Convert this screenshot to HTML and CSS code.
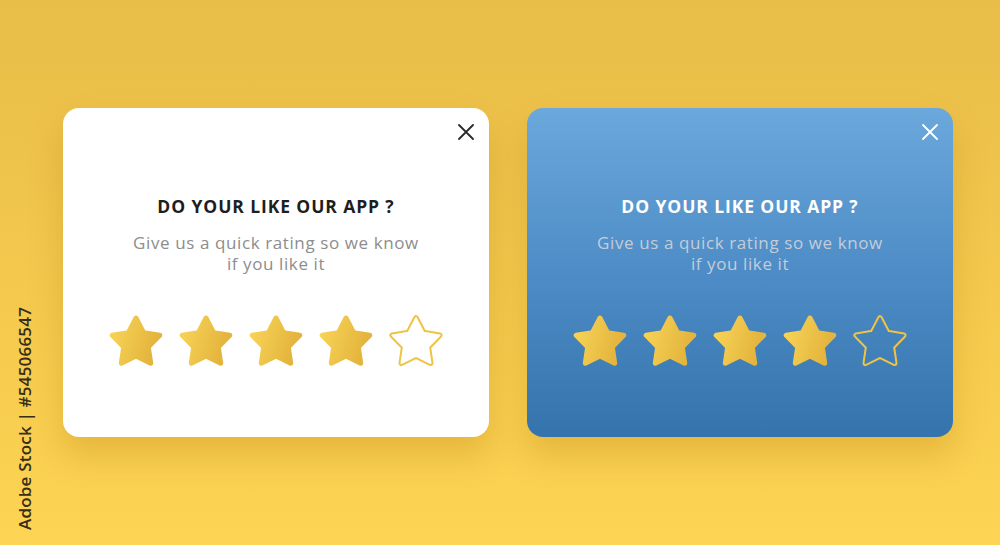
FILE: index.html
```html
<!DOCTYPE html>
<html lang="en">
<head>
    <meta charset="UTF-8">
    <meta name="viewport" content="width=device-width, initial-scale=1.0">
    <title>Rate our app</title>
    <link rel="stylesheet" href="styles.css">
</head>
<body>
    <svg class="defs" width="0" height="0" aria-hidden="true">
        <defs>
            <linearGradient id="star-gold" x1="0" y1="0" x2="1" y2="0.3">
                <stop offset="0" stop-color="#f8d558"/>
                <stop offset="1" stop-color="#e4b43d"/>
            </linearGradient>
            <polygon id="star-shape" points="0,-25 7.6,-10.4 23.78,-7.73 12.3,4 14.69,20.23 0,13 -14.69,20.23 -12.3,4 -23.78,-7.73 -7.6,-10.4"/>
            <!-- outline = rounded star minus a slightly smaller rounded star -->
            <mask id="ring-cut" maskUnits="userSpaceOnUse" x="-30" y="-30" width="60" height="60">
                <use href="#star-shape" fill="#fff" stroke="#fff" stroke-width="5.6" stroke-linejoin="round"/>
                <use href="#star-shape" fill="#000" stroke="#000" stroke-width="1.6" stroke-linejoin="round"/>
            </mask>
            <symbol id="star" viewBox="-27 -28 54 52">
                <use href="#star-shape" stroke-width="5" stroke-linejoin="round"/>
            </symbol>
            <symbol id="star-ring" viewBox="-27 -28 54 52">
                <rect x="-30" y="-30" width="60" height="60" fill="#efc344" mask="url(#ring-cut)"/>
            </symbol>
        </defs>
    </svg>

    <div class="stock-id">Adobe Stock | #545066547</div>

    <div class="cards">
        <div class="card light">
            <button class="close" aria-label="Close">
                <svg viewBox="0 0 16 16"><path d="M1 1 L15 15 M15 1 L1 15"/></svg>
            </button>
            <div class="title">DO YOUR LIKE OUR APP ?</div>
            <div class="subtitle">Give us a quick rating so we know<br>if you like it</div>
            <div class="stars">
                <svg class="star full"><use href="#star"/></svg>
                <svg class="star full"><use href="#star"/></svg>
                <svg class="star full"><use href="#star"/></svg>
                <svg class="star full"><use href="#star"/></svg>
                <svg class="star"><use href="#star-ring"/></svg>
            </div>
        </div>

        <div class="card blue">
            <button class="close" aria-label="Close">
                <svg viewBox="0 0 16 16"><path d="M1 1 L15 15 M15 1 L1 15"/></svg>
            </button>
            <div class="title">DO YOUR LIKE OUR APP ?</div>
            <div class="subtitle">Give us a quick rating so we know<br>if you like it</div>
            <div class="stars">
                <svg class="star full"><use href="#star"/></svg>
                <svg class="star full"><use href="#star"/></svg>
                <svg class="star full"><use href="#star"/></svg>
                <svg class="star full"><use href="#star"/></svg>
                <svg class="star"><use href="#star-ring"/></svg>
            </div>
        </div>
    </div>
</body>
</html>
```

FILE: styles.css
```css
* {
    margin: 0;
    padding: 0;
    box-sizing: border-box;
    font-family: "Open Sans", Arial, sans-serif;
}

html, body {
    width: 1000px;
    height: 545px;
    overflow: hidden;
}

body {
    background: linear-gradient(180deg, #e8bd48 0%, #f4c94d 55%, #fdd453 100%);
    position: relative;
}

.defs {
    position: absolute;
}

.stock-id {
    position: absolute;
    left: 13px;
    top: 530px;
    transform: rotate(-90deg);
    transform-origin: 0 0;
    white-space: nowrap;
    font-size: 17px;
    font-weight: 600;
    color: #362e1a;
    letter-spacing: 0.2px;
}

.cards {
    display: flex;
    gap: 38px;
    padding: 108px 0 0 63px;
}

.card {
    position: relative;
    width: 426px;
    height: 329px;
    border-radius: 16px;
    box-shadow: 0 18px 32px rgba(175, 120, 10, 0.28);
    display: flex;
    flex-direction: column;
    align-items: center;
    padding-top: 88px;
    text-align: center;
}

.card.light {
    background: #fff;
}

.card.blue {
    background: linear-gradient(180deg, #6ba8dc 0%, #4d8cc6 50%, #3473ab 100%);
}

.close {
    position: absolute;
    top: 16px;
    right: 15px;
    width: 16px;
    height: 16px;
    border: none;
    background: none;
    cursor: pointer;
}

.close svg {
    width: 16px;
    height: 16px;
    display: block;
    fill: none;
    stroke-width: 1.8;
    stroke-linecap: round;
}

.light .close svg { stroke: #2a2a2a; }
.blue .close svg { stroke: #fff; }

.title {
    font-size: 17.5px;
    font-weight: 700;
    letter-spacing: 0.9px;
    line-height: 20px;
}

.light .title { color: #1e1e1e; }
.blue .title { color: #fff; }

.subtitle {
    margin-top: 16px;
    font-size: 17px;
    line-height: 21px;
    letter-spacing: 0.6px;
}

.light .subtitle { color: #8d8d8d; }
.blue .subtitle { color: #c4ccd8; }

.stars {
    display: flex;
    gap: 16px;
    margin-top: 41px;
}

.star {
    width: 54px;
    height: 52px;
    overflow: visible;
}

.star.full {
    fill: url(#star-gold);
    stroke: url(#star-gold);
}
```
